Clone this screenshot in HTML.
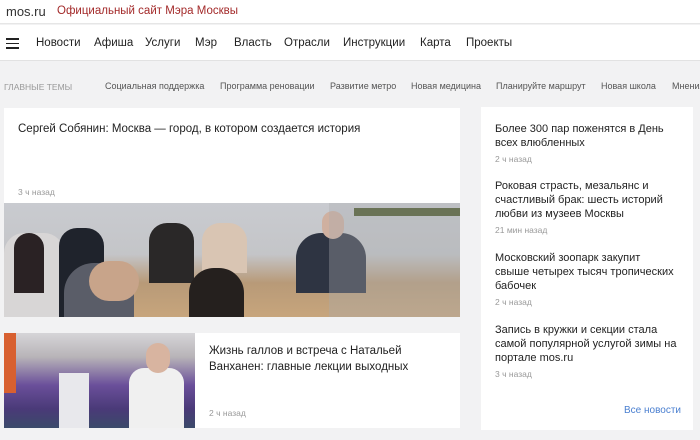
<!DOCTYPE html>
<html><head><meta charset="utf-8"><style>
*{margin:0;padding:0;box-sizing:border-box}
body{width:700px;height:440px;overflow:hidden;background:#f2f2f3;font-family:"Liberation Sans",Arial,sans-serif;position:relative;color:#222}
.a{position:absolute;white-space:nowrap}
#top{position:absolute;left:0;top:0;width:700px;height:24px;background:#fff;border-bottom:1px solid #e6e6e6}
#nav{position:absolute;left:0;top:25px;width:700px;height:36px;background:#fff;border-bottom:1px solid #e2e2e2}
.nv{font-size:11.5px;color:#222;top:37px}
.tm{font-size:9px;color:#555;top:81px}
.card{position:absolute;background:#fff}
.t{font-size:11px;line-height:14px;color:#222;position:absolute;left:14px}
.m{font-size:8.5px;color:#999;position:absolute;left:14px}
</style></head><body>
<div id="top"></div>
<div class="a" style="left:6px;top:4px;font-size:13px;color:#333">mos.ru</div>
<div class="a" style="left:57px;top:5px;font-size:11.5px;color:#a32a2a">Официальный сайт Мэра Москвы</div>
<div id="nav"></div>
<div style="position:absolute;left:6px;top:38px;width:13px;height:1.5px;background:#222"></div>
<div style="position:absolute;left:6px;top:42.5px;width:13px;height:1.5px;background:#222"></div>
<div style="position:absolute;left:6px;top:47px;width:13px;height:1.5px;background:#222"></div>
<div class="a nv" style="left:36px">Новости</div>
<div class="a nv" style="left:94px">Афиша</div>
<div class="a nv" style="left:145px">Услуги</div>
<div class="a nv" style="left:195px">Мэр</div>
<div class="a nv" style="left:234px">Власть</div>
<div class="a nv" style="left:284px">Отрасли</div>
<div class="a nv" style="left:343px">Инструкции</div>
<div class="a nv" style="left:420px">Карта</div>
<div class="a nv" style="left:466px">Проекты</div>
<div class="a tm" style="left:4px;color:#999;font-size:8.5px;top:82px">ГЛАВНЫЕ ТЕМЫ</div>
<div class="a tm" style="left:105px">Социальная поддержка</div>
<div class="a tm" style="left:220px">Программа реновации</div>
<div class="a tm" style="left:330px">Развитие метро</div>
<div class="a tm" style="left:411px">Новая медицина</div>
<div class="a tm" style="left:496px">Планируйте маршрут</div>
<div class="a tm" style="left:601px">Новая школа</div>
<div class="a tm" style="left:672px">Мнения</div>

<div class="card" style="left:4px;top:108px;width:456px;height:209px">
<div class="t" style="top:14px;font-size:11.5px">Сергей Собянин: Москва — город, в котором создается история</div>
<div class="m" style="top:79px">3 ч назад</div>
</div>
<div style="position:absolute;left:4px;top:203px;width:456px;height:114px;background:linear-gradient(180deg,#c9cbd0 0%,#c4c5c8 45%,#b89a78 70%,#c7a57c 100%)">
<div style="position:absolute;left:0;top:30px;width:60px;height:84px;background:#d8d6d6;border-radius:20px 20px 0 0"></div>
<div style="position:absolute;left:10px;top:30px;width:30px;height:60px;background:#2a2224;border-radius:15px 15px 0 0"></div>
<div style="position:absolute;left:55px;top:25px;width:45px;height:89px;background:#1f232c;border-radius:18px 18px 0 0"></div>
<div style="position:absolute;left:60px;top:60px;width:70px;height:54px;background:#5a5d68;border-radius:30px 30px 0 0"></div>
<div style="position:absolute;left:85px;top:58px;width:50px;height:40px;background:#c8a48a;border-radius:25px"></div>
<div style="position:absolute;left:145px;top:20px;width:45px;height:60px;background:#2a2828;border-radius:18px 18px 0 0"></div>
<div style="position:absolute;left:198px;top:20px;width:45px;height:50px;background:#d9c5b3;border-radius:18px 18px 0 0"></div>
<div style="position:absolute;left:185px;top:65px;width:55px;height:49px;background:#25201e;border-radius:25px 25px 0 0"></div>
<div style="position:absolute;left:292px;top:30px;width:70px;height:60px;background:#2e3442;border-radius:25px 25px 0 0"></div>
<div style="position:absolute;left:318px;top:8px;width:22px;height:28px;background:#cfb0a0;border-radius:11px"></div>
<div style="position:absolute;left:325px;top:0;width:131px;height:114px;background:rgba(170,172,176,.35)"></div>
<div style="position:absolute;left:350px;top:5px;width:106px;height:8px;background:#6a7356"></div>
</div>

<div class="card" style="left:4px;top:333px;width:456px;height:95px">
<div class="t" style="left:205px;top:10px;line-height:16px;white-space:normal;width:230px;font-size:11.5px">Жизнь галлов и встреча с Натальей Ванханен: главные лекции выходных</div>
<div class="m" style="left:205px;top:75px">2 ч назад</div>
</div>
<div style="position:absolute;left:4px;top:333px;width:191px;height:95px;background:linear-gradient(180deg,#d6d5d8 0%,#b8b4b8 25%,#6a4f9a 55%,#4a3a78 80%,#3b4a6a 100%)">
<div style="position:absolute;left:0;top:0;width:12px;height:60px;background:#d86030"></div>
<div style="position:absolute;left:55px;top:40px;width:30px;height:55px;background:#e8e8ec"></div>
<div style="position:absolute;left:125px;top:35px;width:55px;height:60px;background:#f0f0f0;border-radius:15px 15px 0 0"></div>
<div style="position:absolute;left:142px;top:10px;width:24px;height:30px;background:#d8b4a0;border-radius:12px"></div>
</div>

<div class="card" style="left:481px;top:107px;width:212px;height:323px">
<div class="t" style="top:15px">Более 300 пар поженятся в День<br>всех влюбленных</div>
<div class="m" style="top:47px">2 ч назад</div>
<div class="t" style="top:72px">Роковая страсть, мезальянс и<br>счастливый брак: шесть историй<br>любви из музеев Москвы</div>
<div class="m" style="top:118px">21 мин назад</div>
<div class="t" style="top:144px">Московский зоопарк закупит<br>свыше четырех тысяч тропических<br>бабочек</div>
<div class="m" style="top:190px">2 ч назад</div>
<div class="t" style="top:216px">Запись в кружки и секции стала<br>самой популярной услугой зимы на<br>портале mos.ru</div>
<div class="m" style="top:262px">3 ч назад</div>
<div class="a" style="left:143px;top:298px;font-size:10px;color:#4a7fd0">Все новости</div>
</div>
</body></html>
